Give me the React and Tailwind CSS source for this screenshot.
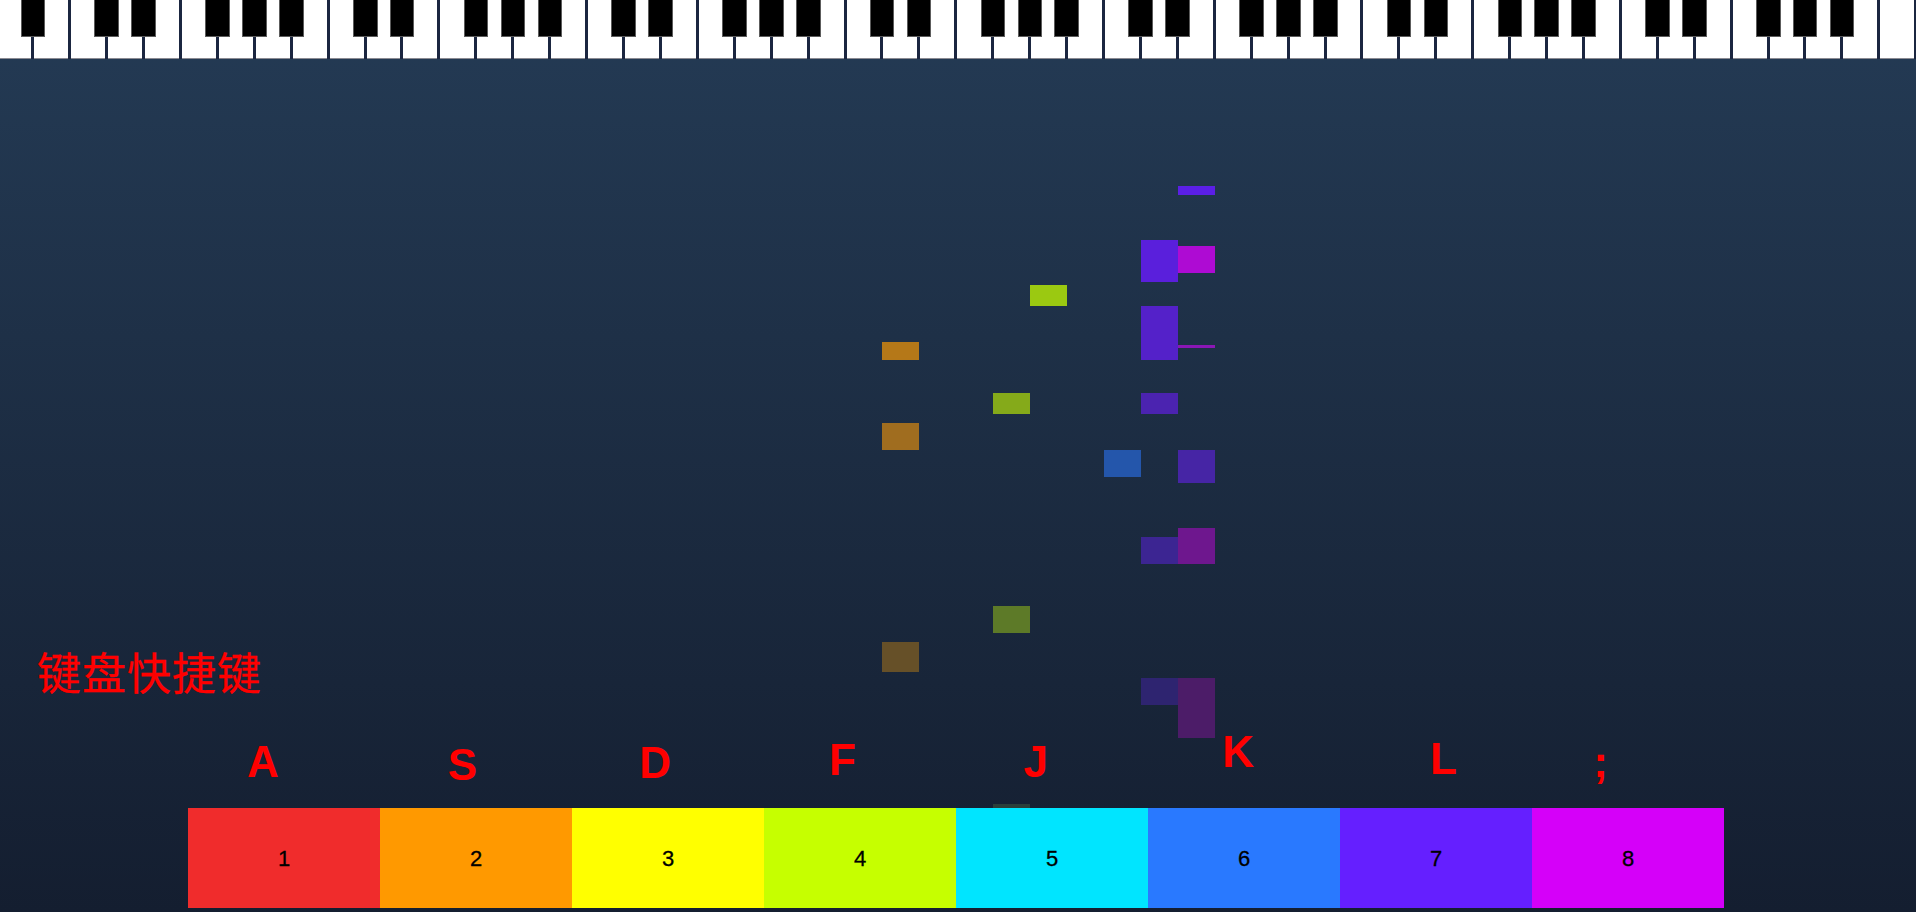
// 52 white keys, starting on A0. C D F G A carry a black key, E and B don't.
const whiteKeys = Array.from({ length: 52 }, (_, i) => {
  if (i === 0) return true
  if (i === 1 || i === 51) return false
  return [0, 1, 3, 4, 5].includes((i - 2) % 7)
})

const notes = [
  { id: 1, cls: 'left-[1177.7px] top-[186px] w-[37px] h-[9px] bg-[#5b1fe6]' },
  { id: 2, cls: 'left-[1140.7px] top-[240px] w-[37px] h-[42px] bg-[#5a1fdc]' },
  { id: 3, cls: 'left-[1177.7px] top-[246px] w-[37px] h-[27px] bg-[#ae0bd3]' },
  { id: 4, cls: 'left-[1030px] top-[285px] w-[37px] h-[21px] bg-[#9bc911]' },
  { id: 5, cls: 'left-[1140.7px] top-[306px] w-[37px] h-[54px] bg-[#5421c9]' },
  { id: 6, cls: 'left-[1177.7px] top-[345px] w-[37px] h-[3px] bg-[#8b17b5]' },
  { id: 7, cls: 'left-[882px] top-[342px] w-[37px] h-[18px] bg-[#b57818]' },
  { id: 8, cls: 'left-[993px] top-[393px] w-[37px] h-[21px] bg-[#85aa1a]' },
  { id: 9, cls: 'left-[1140.7px] top-[393px] w-[37px] h-[21px] bg-[#4b23b0]' },
  { id: 10, cls: 'left-[882px] top-[423px] w-[37px] h-[27px] bg-[#a06d1f]' },
  { id: 11, cls: 'left-[1103.7px] top-[450px] w-[37px] h-[27px] bg-[#2456ab]' },
  { id: 12, cls: 'left-[1177.7px] top-[450px] w-[37px] h-[33px] bg-[#4625a5]' },
  { id: 13, cls: 'left-[1140.7px] top-[537px] w-[37px] h-[27px] bg-[#3c2592]' },
  { id: 14, cls: 'left-[1177.7px] top-[528px] w-[37px] h-[36px] bg-[#6e178e]' },
  { id: 15, cls: 'left-[993px] top-[606px] w-[37px] h-[27px] bg-[#5d7a28]' },
  { id: 16, cls: 'left-[882px] top-[642px] w-[37px] h-[30px] bg-[#665028]' },
  { id: 17, cls: 'left-[1140.7px] top-[678px] w-[37px] h-[27px] bg-[#2e2470]' },
  { id: 18, cls: 'left-[1177.7px] top-[678px] w-[37px] h-[60px] bg-[#4c1c68]' },
  { id: 19, cls: 'left-[993px] top-[804px] w-[37px] h-[4px] bg-[#2a3f3a]' },
]

// the labels sit unevenly above the pads
const labels = [
  { key: 'A', cls: 'w-[31px] mt-[11px]' },
  { key: 'S', cls: 'w-[199px] mt-[14px] text-right' },
  { key: 'D', cls: 'w-[194px] mt-[12px] text-right' },
  { key: 'F', cls: 'w-[185px] mt-[9px] text-right' },
  { key: 'J', cls: 'w-[192px] mt-[11px] text-right' },
  { key: 'K', cls: 'w-[206px] mt-[1px] text-right' },
  { key: 'L', cls: 'w-[203px] mt-[8px] text-right' },
  { key: ';', cls: 'w-[151px] mt-[11px] text-right' },
]

const pads = [
  { n: 1, cls: 'bg-[#f02c2c]' },
  { n: 2, cls: 'bg-[#ff9900]' },
  { n: 3, cls: 'bg-[#ffff00]' },
  { n: 4, cls: 'bg-[#c6ff00]' },
  { n: 5, cls: 'bg-[#00e5ff]' },
  { n: 6, cls: 'bg-[#2979ff]' },
  { n: 7, cls: 'bg-[#651fff]' },
  { n: 8, cls: 'bg-[#d500f9]' },
]

export default function App() {
  return (
    <div className="relative flex h-[912px] w-[1916px] flex-col overflow-hidden bg-linear-to-b from-[#243b55] to-[#141e30] font-['Liberation_Sans',sans-serif]">
      {/* Keyboard */}
      <div className="h-[59px] shrink-0 overflow-hidden bg-[#1b2640]">
        <div className="-ml-[2.7px] flex gap-[3px]">
          {whiteKeys.map((hasBlack, i) => (
            <div key={i} className="relative h-[59px] w-[33.93px] shrink-0 border-b border-[#8a8a92] bg-white">
              {hasBlack && (
                <div className="absolute -right-[14px] top-0 z-10 h-[36.5px] w-[24.6px] border-x border-b border-[#5c5c5c] bg-black" />
              )}
            </div>
          ))}
        </div>
      </div>

      {/* Falling notes */}
      <div className="absolute inset-0">
        {notes.map((note) => (
          <div key={note.id} className={`absolute ${note.cls}`} />
        ))}
      </div>

      <div className="relative mt-auto flex flex-col">
        <h2 className="ml-[37px] text-[44px] font-normal leading-[50px] tracking-[1px] text-[#ff0000] [-webkit-text-stroke:0.3px_#ff0000] font-['Noto_Sans_CJK_SC',serif]">
          键盘快捷键
        </h2>

        {/* Key labels */}
        <div className="mt-[30px] flex h-[82px] pl-[247px]">
          {labels.map((label) => (
            <div key={label.key} className={`h-[50px] text-[44px] font-bold leading-[50px] text-[#ff0000] ${label.cls}`}>
              {label.key}
            </div>
          ))}
        </div>

        {/* Colour pads */}
        <div className="mb-[4px] ml-[188px] flex">
          {pads.map((pad) => (
            <div key={pad.n} className={`flex h-[100px] w-[192px] items-center justify-center text-[22px] text-black [-webkit-text-stroke:0.3px_#000] ${pad.cls}`}>
              {pad.n}
            </div>
          ))}
        </div>
      </div>
    </div>
  )
}
